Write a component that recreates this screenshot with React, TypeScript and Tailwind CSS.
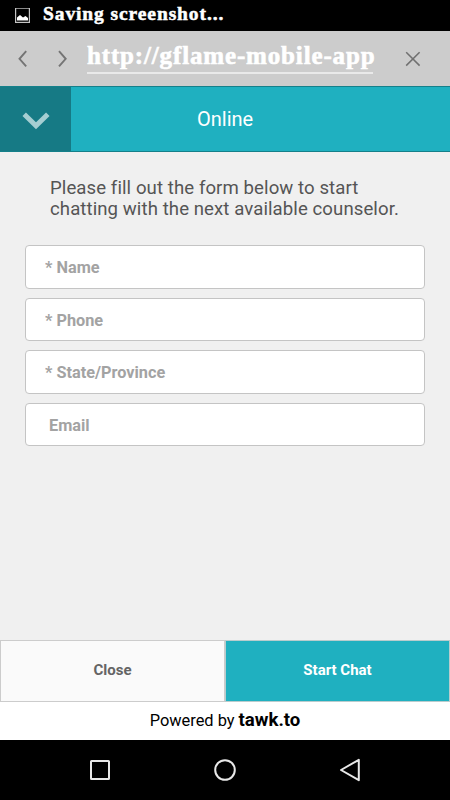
const fields = [
  { name: "name", label: "* Name", pad: "pl-[19px]" },
  { name: "phone", label: "* Phone", pad: "pl-[19px]" },
  { name: "state", label: "* State/Province", pad: "pl-[19px]" },
  { name: "email", label: "Email", pad: "pl-[23px]" },
];

function StatusBar() {
  return (
    <div className="flex h-[31px] items-center bg-black pl-[15px]">
      <svg width="15" height="16" viewBox="0 0 15 16" fill="none">
        <rect x="0.6" y="0.1" width="13.8" height="14.3" stroke="#c4c4c4" strokeWidth="1.2" />
        <path d="M2 12.5V9.5L5 7.1L8 9.5L10.5 8L13 10V12.5Z" fill="#fff" />
      </svg>
      <span className="-mt-[4px] ml-[13px] whitespace-nowrap font-['Liberation_Serif',serif] text-[19.5px] font-bold leading-none tracking-[0.9px] text-white [-webkit-text-stroke:0.5px_white]">
        Saving screenshot...
      </span>
    </div>
  );
}

function BrowserBar() {
  return (
    <div className="flex h-[55px] bg-[#cccccc]">
      <svg className="mt-[19px] ml-[18px]" width="50" height="18" viewBox="0 0 50 18" fill="none" stroke="#747474" strokeWidth="1.9">
        <path d="M8.2 1.2L1.5 8.8L8.2 16.4" />
        <path d="M41 1.2L47.7 8.8L41 16.4" />
      </svg>
      <div className="mt-[8px] ml-[19px] h-[35px] w-[288px]">
        <span className="block h-[33px] whitespace-nowrap font-['Liberation_Serif',serif] text-[25px] font-bold leading-[33px] tracking-[0.85px] text-white [-webkit-text-stroke:0.6px_white]">
          http://gflame-mobile-app
        </span>
        <div className="h-[2px] w-[286px] bg-[#e9e9e9]" />
      </div>
      <svg className="mt-[20px] ml-[30px]" width="16" height="16" viewBox="0 0 16 16" fill="none" stroke="#707070" strokeWidth="1.5">
        <path d="M1.2 1.2L14.6 14.6M14.6 1.2L1.2 14.6" />
      </svg>
    </div>
  );
}

function ChatHeader() {
  return (
    <header className="flex h-[66px] border-t border-b border-[#15808a] bg-[#1fb0c0]">
      <button type="button" aria-label="Minimize" className="flex w-[71px] items-center justify-center bg-[#167a85]">
        <svg className="mt-[4px]" width="28" height="18" viewBox="0 0 28 18" fill="none" stroke="#a5ced2" strokeWidth="5">
          <path d="M2.2 2.3L14 13.7L25.8 2.3" />
        </svg>
      </button>
      <h1 className="mt-[20px] ml-[126px] text-[20px] leading-[24px] text-white">Online</h1>
    </header>
  );
}

function PreChatForm() {
  return (
    <main className="h-[488px] px-[25px]">
      <p className="pt-[26px] pl-[25px] whitespace-nowrap text-[18.6px] leading-[21px] tracking-[0.08px] text-[#555555]">
        Please fill out the form below to start
        <br />
        chatting with the next available counselor.
      </p>
      <form className="mt-[25px] flex flex-col gap-[9px]">
        {fields.map((f) => (
          <input
            key={f.name}
            name={f.name}
            placeholder={f.label}
            className={`h-[43.5px] w-full rounded-[4px] border border-[#c4c4c4] bg-white pt-[2px] text-[16.3px] font-bold placeholder:text-[#a3a3a3] ${f.pad}`}
          />
        ))}
      </form>
    </main>
  );
}

function Footer() {
  return (
    <footer>
      <div className="flex h-[62px] text-[15px] font-bold">
        <button type="button" className="w-[225px] border border-[#cccccc] bg-[#fafafa] pb-[2px] text-[#646464]">
          Close
        </button>
        <button type="button" className="w-[225px] border border-[#b9cccd] bg-[#1fb0c0] pb-[2px] text-white">
          Start Chat
        </button>
      </div>
      <div className="h-[38px] bg-white text-center text-[16.4px] leading-[36px] text-black">
        Powered by <b className="text-[18.6px]">tawk.to</b>
      </div>
    </footer>
  );
}

function NavBar() {
  return (
    <nav className="flex h-[60px] items-center justify-between bg-black px-[88px]">
      <svg width="24" height="24" viewBox="0 0 24 24" fill="none" stroke="#e8e8e8" strokeWidth="2">
        <rect x="3" y="3" width="18" height="18" rx="0.5" />
      </svg>
      <svg width="24" height="24" viewBox="0 0 24 24" fill="none" stroke="#e8e8e8" strokeWidth="2">
        <circle cx="12" cy="12" r="9.8" />
      </svg>
      <svg width="24" height="24" viewBox="0 0 24 24" fill="none" stroke="#e8e8e8" strokeWidth="2" strokeLinejoin="round">
        <path d="M20.8 1.8V22.2L3 12Z" />
      </svg>
    </nav>
  );
}

export default function App() {
  return (
    <div className="flex h-[800px] w-[450px] flex-col overflow-hidden bg-[#f0f0f0] font-['Roboto',sans-serif]">
      <StatusBar />
      <BrowserBar />
      <ChatHeader />
      <PreChatForm />
      <Footer />
      <NavBar />
    </div>
  );
}
